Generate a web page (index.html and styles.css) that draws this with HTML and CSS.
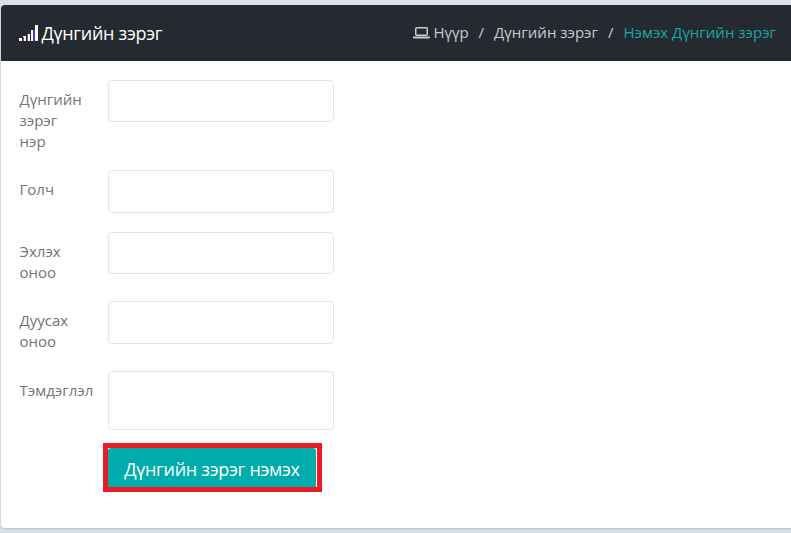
FILE: index.html
```html
<!DOCTYPE html>
<html lang="mn">
<head>
<meta charset="utf-8">
<title>Дүнгийн зэрэг</title>
<link rel="stylesheet" href="styles.css">
</head>
<body>
<main class="panel">
  <header class="panel-header">
    <h1 class="title">
      <svg class="signal" width="19" height="17" viewBox="0 0 19 17" shape-rendering="crispEdges" aria-hidden="true">
        <path fill="#fff" d="M0 14h3v3H0zM4 12h3v5H4zM8 10h3v7H8zM12 6h3v11h-3zM16 1h3v16h-3z"/>
        <path fill="#a03ca8" d="M4 13h1v4H4zM8 10h1v7H8z"/>
        <path fill="#4038d8" d="M14 6h1v11h-1zM15 6h1v11h-1z"/>
      </svg>
      <span class="title-text">Дүнгийн зэрэг</span>
    </h1>
    <nav class="breadcrumb">
      <a class="crumb crumb-home">
        <svg class="laptop" width="17" height="12" viewBox="0 0 17 12" aria-hidden="true">
          <rect x="2.75" y="0.75" width="11.5" height="7.5" rx="1" fill="none" stroke="#c8ccd0" stroke-width="1.5"/>
          <path fill="#c8ccd0" d="M0 9.5h17v.8q0 1.2-1.5 1.2h-14Q0 11.500 0 10.300z"/>
        </svg>
        <span class="home-text">Нүүр</span>
      </a>
      <span class="separator">/</span>
      <a class="crumb middle-text">Дүнгийн зэрэг</a>
      <span class="separator">/</span>
      <span class="crumb-active">Нэмэх Дүнгийн зэрэг</span>
    </nav>
  </header>
  <form class="form">
    <label class="label" for="name">Дүнгийн зэрэг нэр</label>
    <input class="field" id="name">
    <label class="label" for="point">Голч</label>
    <input class="field tall" id="point">
    <label class="label" for="from">Эхлэх оноо</label>
    <input class="field" id="from">
    <label class="label" for="upto">Дуусах оноо</label>
    <input class="field tall" id="upto">
    <label class="label" for="note">Тэмдэглэл</label>
    <textarea class="field note" id="note"></textarea>
    <div class="highlight"><button class="submit" type="button"><span class="submit-text">Дүнгийн зэрэг нэмэх</span></button></div>
  </form>
</main>
</body>
</html>
```
FILE: styles.css
```css
* { box-sizing: border-box; }
body {
  margin: 0;
  height: 533px;
  padding: 5px 0 5px 1px;
  overflow: hidden;
  background: #d9e0e7;
  color: #707478;
  font: 15px/21px "Open Sans", "Noto Sans", sans-serif;
}
.panel {
  height: 523px;
  background: #fff;
  border-radius: 4px 0 0 4px;
  box-shadow: 0 1px 2px rgba(0, 0, 0, .16);
}
.panel-header {
  display: flex;
  align-items: center;
  justify-content: space-between;
  height: 56px;
  padding: 0 15px 0 18px;
  background: #242a30;
  border-radius: 4px 0 0 0;
}
.title {
  display: flex;
  align-items: center;
  gap: 3.500px;
  margin: 0;
  color: #fff;
  font-size: 18px;
  font-weight: 400;
  line-height: 24px;
  letter-spacing: -.3px;
  white-space: nowrap;
}
.signal { margin-bottom: 2px; }
.breadcrumb {
  display: flex;
  align-items: center;
  padding-bottom: 2px;
  color: #c8ccd0;
  white-space: nowrap;
}
.crumb-home {
  display: flex;
  align-items: center;
  gap: 3px;
}
.laptop { margin-top: 2px; }
.separator {
  width: 25.500px;
  text-align: center;
}
.crumb-active { color: #1ba8a5; }
.form {
  display: grid;
  grid-template-columns: 73.500px 226px;
  grid-template-rows: 90px 62px 69px 70px 72px 49px;
  column-gap: 15px;
  align-items: start;
  padding: 19px 0 0 18.500px;
}
.label {
  padding-top: 9px;
  width: 64px;
}
.field {
  display: block;
  width: 226px;
  height: 42px;
  margin: 0;
  padding: 6px 12px;
  border: 1px solid #e2e5e8;
  border-radius: 4px;
  background: #fff;
  resize: none;
  outline: 0;
}
.tall { height: 43px; }
.note { height: 59px; }
.highlight {
  grid-column: 2;
  width: 219px;
  height: 49px;
  margin-left: -5px;
  border: 5px solid #ed1c24;
}
.submit {
  display: block;
  width: 208px;
  height: 39px;
  padding: 3px 0 0;
  border: 0;
  border-radius: 3px 3px 0 0;
  background: #00acac;
  color: #fff;
  font: 18px/24px "Open Sans", "Noto Sans", sans-serif;
  letter-spacing: -.3px;
  white-space: nowrap;
}
```
